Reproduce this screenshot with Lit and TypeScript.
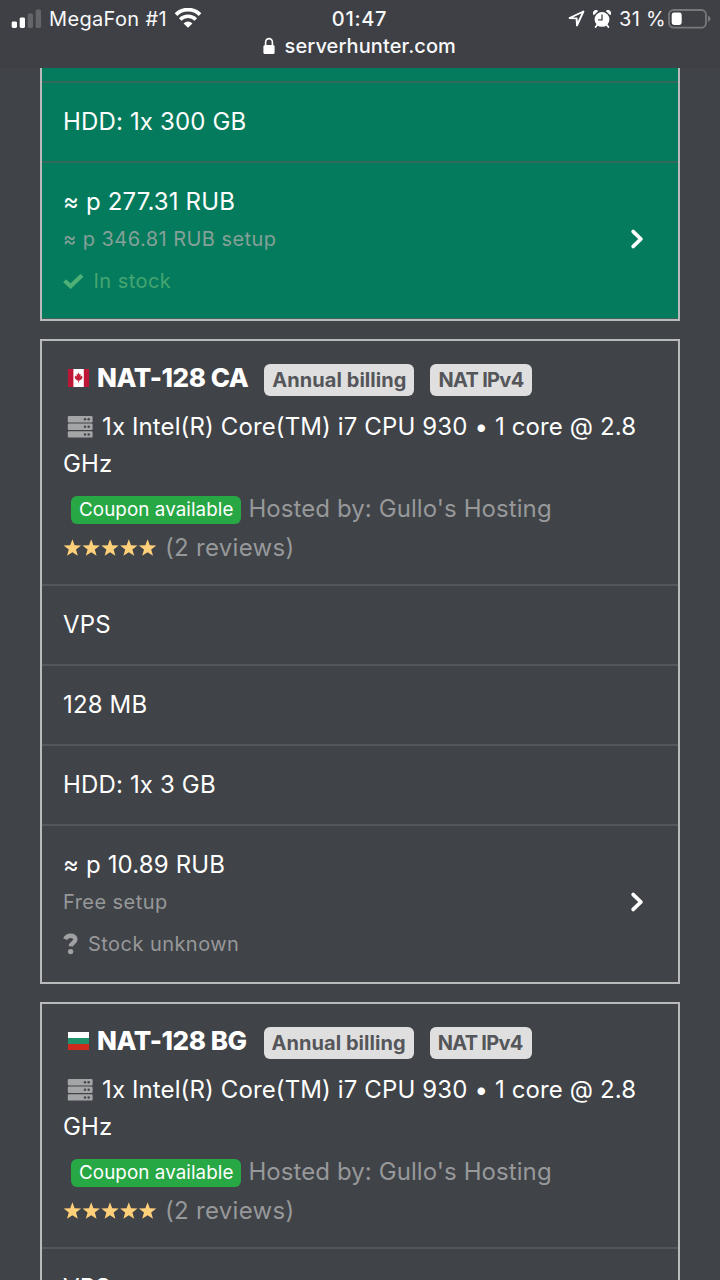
import { LitElement, html, css, svg, nothing } from "lit";
import { customElement, property } from "lit/decorators.js";

interface Offer {
  name: string;
  country: "ca" | "bg";
  rows: string[];
  price?: string;
}

const star = svg`<path d="M9 0.3 L11.2 6.3 L17.7 6.5 L12.6 10.5 L14.4 16.8 L9 13.2 L3.6 16.8 L5.4 10.5 L0.3 6.5 L6.8 6.3 Z"/>`;

const chevron = html`<svg class="chevron" width="16" height="24" viewBox="0 0 16 24">
  <path d="M4.2 4.6 L11.9 12 L4.2 19.4" fill="none" stroke="#fff" stroke-width="3.8" stroke-linecap="round" stroke-linejoin="round" />
</svg>`;

@customElement("status-bar")
export class StatusBar extends LitElement {
  static styles = css`
    :host {
      display: block;
      flex: none;
      box-sizing: border-box;
      height: 68px;
      padding: 4px 9px 0 11px;
      background: #3e4045;
      color: #f8f8fa;
      font-family: Inter, sans-serif;
    }
    .top {
      display: grid;
      grid-template-columns: 1fr auto 1fr;
      height: 28px;
      align-items: center;
      font-size: 20px;
      line-height: 28px;
    }
    .left,
    .right {
      display: flex;
      align-items: center;
      height: 28px;
      white-space: nowrap;
    }
    .right {
      justify-content: flex-end;
    }
    .carrier {
      margin-left: 7px;
      letter-spacing: 0.35px;
      padding-top: 1px;
    }
    .wifi {
      margin-left: 7px;
      margin-bottom: 2px;
    }
    .time {
      font-weight: 500;
      letter-spacing: 0.7px;
      padding: 1px 3px 0 0;
    }
    .location {
      margin-right: 0.5px;
    }
    .alarm {
      margin: 0 8px 0 8px;
    }
    .percent {
      letter-spacing: 0.3px;
      padding-top: 1px;
    }
    .battery {
      margin-left: 2px;
    }
    .address {
      display: flex;
      justify-content: center;
      align-items: center;
      height: 28px;
      padding-right: 3px;
      font-size: 20px;
      font-weight: 500;
      letter-spacing: 0.1px;
      gap: 9.5px;
    }
    svg {
      display: block;
      flex: none;
    }
  `;
  render() {
    return html`
      <div class="top">
        <div class="left">
          <svg width="31" height="20" viewBox="0 0 31 20">
            <g fill="#fff">
              <rect x="0.7" y="12.4" width="5.3" height="6.6" rx="1.4" />
              <rect x="8.7" y="8.4" width="5.3" height="10.6" rx="1.4" />
              <rect x="16.7" y="4.4" width="5.3" height="14.6" rx="1.4" fill="#646569" />
              <rect x="24.7" y="0.4" width="5.3" height="18.6" rx="1.4" fill="#646569" />
            </g>
          </svg>
          <span class="carrier">MegaFon #1</span>
          <svg class="wifi" width="28" height="20" viewBox="0 0 28 20">
            <g fill="none" stroke="#fff">
              <path d="M2 6.6 A17 17 0 0 1 26 6.6" stroke-width="3.8" />
              <path d="M6.2 11.4 A11 11 0 0 1 21.8 11.4" stroke-width="3.5" />
            </g>
            <path d="M14 19.8 L9.6 15.4 A6.2 6.2 0 0 1 18.4 15.4 Z" fill="#fff" />
          </svg>
        </div>
        <span class="time">01:47</span>
        <div class="right">
          <svg class="location" width="17" height="17" viewBox="0 0 17 17">
            <path d="M1.6 8 L15.4 1.5 L9 15.4 L8.6 8.4 Z" fill="none" stroke="#fff" stroke-width="1.9" stroke-linejoin="round" />
          </svg>
          <svg class="alarm" width="18" height="18" viewBox="0 0 18 18">
            <circle cx="9" cy="9.4" r="7.4" fill="#fff" />
            <path d="M0.8 5.2 A3 3 0 0 1 5.2 1 Z M17.2 5.2 A3 3 0 0 0 12.8 1 Z" fill="#fff" />
            <path d="M4.5 14.5 L2.6 17 M13.5 14.5 L15.4 17" stroke="#fff" stroke-width="1.8" stroke-linecap="round" />
            <path d="M9 4.6 V9.9 H5.2" fill="none" stroke="#3e4045" stroke-width="1.3" />
          </svg>
          <span class="percent">31 %</span>
          <svg class="battery" width="43" height="20" viewBox="0 0 43 20">
            <rect x="1" y="1" width="37" height="17.6" rx="4.6" fill="none" stroke="#77787b" stroke-width="1.8" />
            <rect x="3.7" y="3.6" width="10" height="12.4" rx="2.4" fill="#fff" />
            <path d="M40 6.6 Q42.6 8 42.6 9.8 Q42.6 11.6 40 13 Z" fill="#77787b" />
          </svg>
        </div>
      </div>
      <div class="address">
        <svg width="12" height="18" viewBox="0 0 12 18">
          <rect x="0.4" y="8" width="11.2" height="9" rx="1.6" fill="#fff" />
          <path d="M2.6 9 V5.2 A3.4 3.6 0 0 1 9.4 5.2 V9" fill="none" stroke="#fff" stroke-width="1.6" />
        </svg>
        <span>serverhunter.com</span>
      </div>
    `;
  }
}

const sharedStyles = css`
  :host {
    display: block;
    flex: none;
    box-sizing: border-box;
    border: 2px solid #b9babc;
    color: #fff;
    font-family: Inter, sans-serif;
    font-size: 24px;
    letter-spacing: 0.15px;
  }
  svg {
    display: block;
    flex: none;
  }
  .row {
    box-sizing: border-box;
    height: 80px;
    padding: 0 21px;
    border-top: 2px solid #53565c;
    line-height: 77px;
    white-space: nowrap;
  }
  .price {
    box-sizing: border-box;
    height: 158px;
    padding: 20px 33px 0 21px;
    border-top: 2px solid #53565c;
    display: grid;
    grid-template-columns: 1fr auto;
  }
  .amount {
    line-height: 38px;
  }
  .muted {
    color: #97989a;
  }
  .setup {
    margin-top: -1px;
    font-size: 20px;
    letter-spacing: 0.45px;
    line-height: 38px;
  }
  .stock {
    display: flex;
    align-items: center;
    height: 38px;
    margin-top: 4px;
    font-size: 20px;
    letter-spacing: 0.45px;
    line-height: 38px;
  }
  .chevron {
    margin-top: 44px;
  }
`;

@customElement("featured-offer")
export class FeaturedOffer extends LitElement {
  static styles = [
    sharedStyles,
    css`
      :host {
        border-top: 0;
        background: #047b5c;
      }
      .edge {
        height: 13px;
      }
      .row,
      .price {
        border-top-color: #32695b;
      }
      .price {
        border-bottom: 1px solid #43605a;
      }
      .muted {
        color: #86a199;
      }
      .stock {
        color: #46a571;
        gap: 9.5px;
      }
    `,
  ];
  render() {
    return html`
      <div class="edge"></div>
      <div class="row">HDD: 1x 300 GB</div>
      <div class="price">
        <div>
          <div class="amount">≈ p 277.31 RUB</div>
          <div class="setup muted">≈ p 346.81 RUB setup</div>
          <div class="stock">
            <svg width="21" height="16" viewBox="0 0 21 16">
              <path d="M1.6 7.8 L7.6 13.2 L19 2.2" fill="none" stroke="#4fb077" stroke-width="4.2" />
            </svg>
            <span>In stock</span>
          </div>
        </div>
        ${chevron}
      </div>
    `;
  }
}

@customElement("offer-card")
export class OfferCard extends LitElement {
  @property({ attribute: false }) offer!: Offer;

  static styles = [
    sharedStyles,
    css`
      .head {
        box-sizing: border-box;
        height: 243px;
        padding: 20px 21px 0;
      }
      .title {
        display: flex;
        align-items: center;
        height: 38px;
        padding-left: 5px;
      }
      .title svg {
        margin-bottom: 4px;
      }
      .name {
        min-width: 150.5px;
        margin-left: 8px;
        font-size: 26px;
        font-weight: 800;
        line-height: 36px;
        letter-spacing: -0.45px;
        padding-bottom: 4px;
        white-space: nowrap;
      }
      .tag {
        box-sizing: border-box;
        height: 32px;
        margin-left: 16px;
        padding: 0 8px;
        border-radius: 6px;
        background: #dfdfe0;
        color: #55565a;
        font-size: 20px;
        font-weight: 700;
        line-height: 32px;
        letter-spacing: 0.05px;
        white-space: nowrap;
      }
      .tag.tight {
        padding-right: 9px;
        letter-spacing: -0.7px;
      }
      .spec {
        margin-top: 10px;
        line-height: 36.5px;
        letter-spacing: 0.12px;
      }
      .server {
        display: inline-block;
        margin: 0 9px 0 4px;
        vertical-align: -3px;
      }
      .host {
        display: flex;
        align-items: center;
        height: 40px;
        margin-top: 6px;
        padding-left: 8px;
        letter-spacing: 0.08px;
        white-space: nowrap;
      }
      .coupon {
        height: 28px;
        margin-top: 3px;
        padding: 0 8px;
        border-radius: 6px;
        background: #28a745;
        font-size: 18.8px;
        line-height: 28.5px;
      }
      .host .muted {
        margin-left: 7px;
      }
      .reviews {
        display: flex;
        align-items: center;
        height: 39px;
        gap: 8px;
        letter-spacing: 0.3px;
      }
      .stock {
        gap: 9px;
      }
    `,
  ];

  flag() {
    return this.offer.country === "ca"
      ? html`<svg width="21" height="18" viewBox="0 0 21 18">
          <rect width="21" height="18" fill="#bd1636" />
          <rect x="5.4" width="10.4" height="18" fill="#fff" />
          <path d="M10.6 3.6 L11.6 5.4 L12.7 5 L12.4 7.4 L13.8 6.5 L14.6 8.2 L13.8 10 L11.8 11.4 H11 V13.6 H10.2 V11.4 H9.4 L7.4 10 L6.6 8.2 L7.4 6.5 L8.8 7.4 L8.5 5 L9.6 5.4 Z" fill="#c4223c" />
        </svg>`
      : html`<svg width="21" height="18" viewBox="0 0 21 18">
          <rect width="21" height="6.2" fill="#fff" />
          <rect y="6" width="21" height="6" fill="#20916b" />
          <rect y="12" width="21" height="6" fill="#cf2a1c" />
        </svg>`;
  }

  priceRow() {
    return html`<div class="price">
      <div>
        <div class="amount">${this.offer.price}</div>
        <div class="setup muted">Free setup</div>
        <div class="stock muted">
          <svg width="16" height="22" viewBox="0 0 16 22">
            <path d="M2.2 6.2 C3.4 3.4 5.4 2.8 7.6 2.8 C10.4 2.8 12.4 4.2 12.4 6.6 C12.4 9.8 8 9.6 7.8 13.4" fill="none" stroke="#a0a1a3" stroke-width="4.4" />
            <circle cx="7.6" cy="18.6" r="2.7" fill="#a0a1a3" />
          </svg>
          <span>Stock unknown</span>
        </div>
      </div>
      ${chevron}
    </div>`;
  }

  render() {
    return html`
      <div class="head">
        <div class="title">
          ${this.flag()}
          <span class="name">${this.offer.name}</span>
          <span class="tag">Annual billing</span>
          <span class="tag tight">NAT IPv4</span>
        </div>
        <div class="spec">
          <svg class="server" width="26" height="22" viewBox="0 0 26 22">
            ${[0, 7.6, 15.2].map(
              (y) => svg`<rect x="0.8" y=${y} width="24.8" height="6.4" rx="1.2" fill="#a4a5a7"/>
                <circle cx="18" cy=${y + 3.2} r="1.25" fill="#45474b"/><circle cx="21.7" cy=${y + 3.2} r="1.25" fill="#45474b"/>`
            )}
          </svg>1x Intel(R) Core(TM) i7 CPU 930 • 1 core @ 2.8 GHz
        </div>
        <div class="host">
          <span class="coupon">Coupon available</span>
          <span class="muted">Hosted by: Gullo's Hosting</span>
        </div>
        <div class="reviews">
          <svg width="94" height="18" viewBox="0 0 94 18" fill="#ffd07a">
            ${[0, 1, 2, 3, 4].map((i) => svg`<g transform="translate(${0.4 + i * 18.8} 0)">${star}</g>`)}
          </svg>
          <span class="muted">(2 reviews)</span>
        </div>
      </div>
      ${this.offer.rows.map((r) => html`<div class="row">${r}</div>`)}
      ${this.offer.price ? this.priceRow() : nothing}
    `;
  }
}

@customElement("app-root")
export class AppRoot extends LitElement {
  static styles = css`
    :host {
      display: flex;
      flex-direction: column;
      height: 1280px;
      overflow: hidden;
      background: #404347;
    }
    .list {
      display: flex;
      flex-direction: column;
      gap: 18px;
      padding: 0 40px;
    }
  `;
  offers: Offer[] = [
    { name: "NAT-128 CA", country: "ca", rows: ["VPS", "128 MB", "HDD: 1x 3 GB"], price: "≈ p 10.89 RUB" },
    { name: "NAT-128 BG", country: "bg", rows: ["VPS"] },
  ];
  render() {
    return html`
      <status-bar></status-bar>
      <main class="list">
        <featured-offer></featured-offer>
        ${this.offers.map((o) => html`<offer-card .offer=${o}></offer-card>`)}
      </main>
    `;
  }
}
